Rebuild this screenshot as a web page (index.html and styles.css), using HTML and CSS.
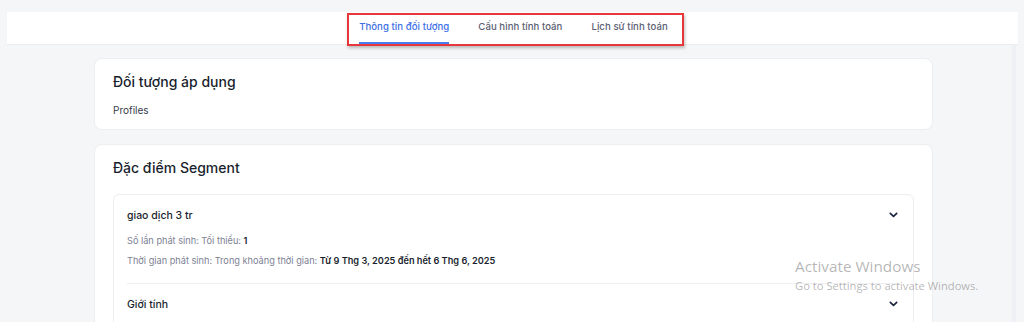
FILE: index.html
```html
<!DOCTYPE html>
<html lang="vi">
<head>
<meta charset="utf-8">
<link rel="stylesheet" href="styles.css">
</head>
<body>
<div class="page">
  <div class="topbar">
    <nav class="tabs">
      <a class="tab active">Thông tin đối tượng</a>
      <a class="tab">Cấu hình tính toán</a>
      <a class="tab">Lịch sử tính toán</a>
    </nav>
    <div class="highlight"></div>
  </div>
  <div class="content">
    <section class="card">
      <h2 class="card-title">Đối tượng áp dụng</h2>
      <p class="card-text">Profiles</p>
    </section>
    <section class="card card-seg">
      <h2 class="card-title">Đặc điểm Segment</h2>
      <div class="inner">
        <div class="item">
          <div class="item-head">
            <span class="item-name">giao dịch 3 tr</span>
            <svg class="chev" width="9" height="6" viewBox="0 0 9 6"><path d="M1.3 1.3 L4.5 4.4 L7.7 1.3" fill="none" stroke="#1c2440" stroke-width="1.7" stroke-linecap="round" stroke-linejoin="round"/></svg>
          </div>
          <div class="item-line first">Số lần phát sinh: Tối thiểu: <b>1</b></div>
          <div class="item-line">Thời gian phát sinh: Trong khoảng thời gian: <b>Từ 9 Thg 3, 2025 đến hết 6 Thg 6, 2025</b></div>
        </div>
        <div class="item item-last">
          <div class="item-head">
            <span class="item-name">Giới tính</span>
            <svg class="chev" width="9" height="6" viewBox="0 0 9 6"><path d="M1.3 1.3 L4.5 4.4 L7.7 1.3" fill="none" stroke="#1c2440" stroke-width="1.7" stroke-linecap="round" stroke-linejoin="round"/></svg>
          </div>
        </div>
      </div>
    </section>
  </div>
  <div class="scroll-strip"></div>
</div>
<div class="watermark">
  <div class="wm-title">Activate Windows</div>
  <div class="wm-sub">Go to Settings to activate Windows.</div>
</div>
</body>
</html>
```
FILE: styles.css
```css
* { box-sizing: border-box; }
html, body { margin: 0; padding: 0; }
body {
  background: #f5f6f8;
  font-family: "Inter", "Open Sans", sans-serif;
  color: #1c2233;
  width: 1024px;
  height: 322px;
  overflow: hidden;
}
.page { position: relative; padding-top: 12px; }
.topbar {
  position: relative;
  margin: 0 6px 0 7px;
  height: 32px;
  background: #fff;
  box-shadow: 0 1px 1px rgba(0,0,0,0.04);
  display: flex;
  justify-content: center;
}
.tabs { display: flex; gap: 29px; margin-left: 2px; }
.tab {
  font-size: 9.6px;
  font-weight: 500;
  color: #5b6072;
  line-height: 30px;
  height: 32px;
  border-bottom: 2px solid transparent;
  letter-spacing: 0.05px;
}
.tab.active { color: #3b6fe6; border-bottom-color: #4a7bef; }
.highlight {
  position: absolute;
  left: 340px;
  top: 1px;
  width: 337px;
  height: 33px;
  border: 2px solid #e8373c;
  box-shadow: 1px 2px 3px rgba(0,0,0,0.25);
}
.content {
  margin: 14px 0 0 94px;
  width: 839px;
  display: flex;
  flex-direction: column;
  gap: 14px;
}
.card {
  background: #fff;
  border: 1px solid #eceef2;
  border-radius: 8px;
  padding: 14px 18px 12px;
}
.card-title {
  margin: 0;
  font-size: 14px;
  font-weight: 500;
  line-height: 18px;
  color: #1a1f2e;
}
.card-text {
  margin: 12px 0 0;
  font-size: 10px;
  line-height: 14px;
  color: #353a4a;
}
.card-seg { padding-bottom: 0; height: 190px; }
.inner {
  margin-top: 17px;
  border: 1px solid #eceef2;
  border-radius: 6px;
  padding: 0 13px;
}
.item { padding: 12px 0 16px; border-bottom: 1px solid #eceef2; }
.item-last { border-bottom: none; padding-top: 12px; }
.item-head {
  display: flex;
  justify-content: space-between;
  align-items: center;
  height: 16px;
}
.item-name { font-size: 10.5px; font-weight: 500; color: #1a1f2e; }
.chev { margin-right: 2px; }
.item-line {
  font-size: 9.2px;
  color: #7d8293;
  line-height: 12px;
  margin-top: 8px;
}
.item-line.first { margin-top: 12px; }
.item-line b { color: #1a1f2e; font-weight: 600; }
.scroll-strip {
  position: absolute;
  right: 8px;
  top: 44px;
  width: 4px;
  height: 278px;
  background: #eef0f3;
}
.watermark {
  position: absolute;
  left: 795px;
  top: 257px;
  font-family: "Open Sans", "DejaVu Sans", sans-serif;
  color: rgba(90,90,90,0.45);
}
.wm-title { font-size: 15.3px; line-height: 19px; }
.wm-sub { font-size: 11.2px; line-height: 18px; margin-top: 1px; }
```
